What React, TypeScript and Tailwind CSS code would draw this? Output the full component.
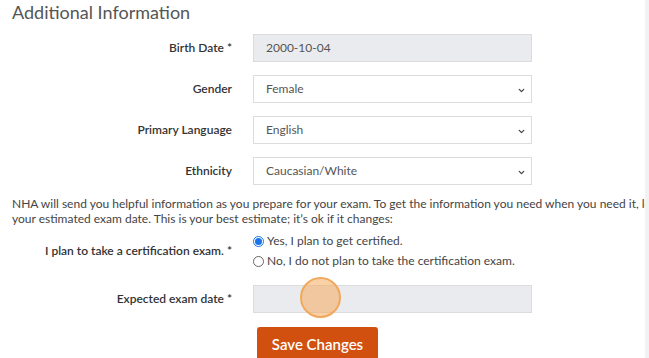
import { ChevronDown } from 'lucide-react';

const FONT = { fontFamily: 'Lato, "Open Sans", Arial, sans-serif' };

function Row({ label, children }: { label: string; children: React.ReactNode }) {
  return (
    <div className="flex items-center mb-[13px]">
      <div className="w-[232px] text-right text-[12px] font-semibold text-[#333]">{label}</div>
      <div className="ml-[21px] w-[279px]">{children}</div>
    </div>
  );
}

function Select({ value }: { value: string }) {
  return (
    <div className="relative h-[28px] border border-[#dcdcdc] bg-white flex items-center pl-[12px] text-[12px] text-[#555]">
      {value}
      <ChevronDown className="absolute right-[5px] top-[10px] w-[9px] h-[9px] text-[#444]" strokeWidth={3.5} />
    </div>
  );
}

function Radio({ checked, label }: { checked?: boolean; label: string }) {
  return (
    <div className="flex items-center h-[20px] text-[12px] text-[#444]">
      {checked ? (
        <span className="w-[11px] h-[11px] rounded-full border border-[#1a73e8] flex items-center justify-center mr-[3px]">
          <span className="w-[7px] h-[7px] rounded-full bg-[#1a73e8]" />
        </span>
      ) : (
        <span className="w-[11px] h-[11px] rounded-full border border-[#666] mr-[3px]" />
      )}
      {label}
    </div>
  );
}

export default function App() {
  return (
    <div className="flex w-[649px] h-[358px] overflow-hidden bg-white" style={FONT}>
      <div className="relative w-[645px] overflow-hidden">
        <h2 className="pl-[12px] text-[18px] leading-[24px] text-[#555] mb-[10px]">Additional Information</h2>

        <Row label="Birth Date *">
          <div className="h-[28px] border border-[#dcdcdc] bg-[#e9ebee] flex items-center pl-[12px] text-[12px] text-[#555]">2000-10-04</div>
        </Row>
        <Row label="Gender"><Select value="Female" /></Row>
        <Row label="Primary Language"><Select value="English" /></Row>
        <Row label="Ethnicity"><Select value="Caucasian/White" /></Row>

        <p className="pl-[12px] text-[12px] leading-[15px] text-[#444] whitespace-nowrap mt-[-2px]">
          NHA will send you helpful information as you prepare for your exam. To get the information you need when you need it, let us know
          <br />
          your estimated exam date. This is your best estimate; it’s ok if it changes:
        </p>

        <div className="flex items-center mt-[5px]">
          <div className="w-[232px] text-right text-[12px] font-semibold text-[#333]">I plan to take a certification exam. *</div>
          <div className="ml-[21px]">
            <Radio checked label="Yes, I plan to get certified." />
            <Radio label="No, I do not plan to take the certification exam." />
          </div>
        </div>

        <div className="flex items-center mt-[14px]">
          <div className="w-[232px] text-right text-[12px] font-semibold text-[#333]">Expected exam date *</div>
          <div className="ml-[21px] w-[279px] h-[28px] border border-[#dcdcdc] bg-[#e9ebee]" />
        </div>

        <div className="ml-[257px] mt-[14px]">
          <button className="w-[121px] h-[34px] rounded-[3px] bg-[#d1500f] text-white text-[15px] font-semibold">Save Changes</button>
        </div>

        <div className="absolute left-[300px] top-[277px] w-[41px] h-[41px] rounded-full border-2 border-[#f2a85c] bg-[rgba(246,170,95,0.55)]" />
      </div>
      <div className="flex-1 bg-[#f1f2f4]" />
    </div>
  );
}
